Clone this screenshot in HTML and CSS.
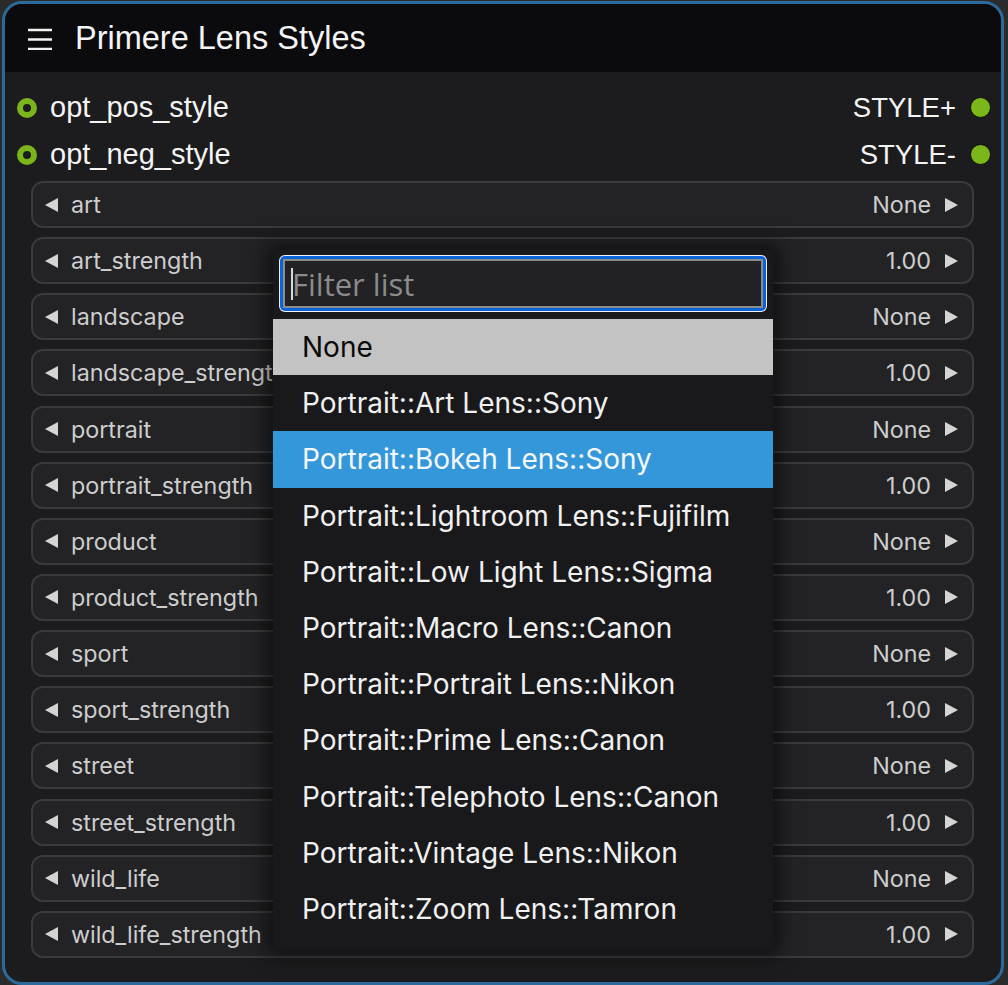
FILE: index.html
```html
<!DOCTYPE html>
<html lang="en">
<head>
<meta charset="utf-8">
<title>Primere Lens Styles</title>
<link rel="stylesheet" href="styles.css">
</head>
<body>
<div class="node">
  <div class="header">
    <svg class="menu-icon" width="26" height="22" viewBox="0 0 26 22">
      <path d="M1 2H25M1 11.5H25M1 21H25" stroke="#f2f2f2" stroke-width="2.6" fill="none"/>
    </svg>
    <span class="title">Primere Lens Styles</span>
  </div>
  <div class="body">
    <div class="io-row">
      <span class="in-dot"></span><span class="io-label">opt_pos_style</span>
      <span class="spacer"></span>
      <span class="out-label">STYLE+</span><span class="out-dot"></span>
    </div>
    <div class="io-row">
      <span class="in-dot"></span><span class="io-label">opt_neg_style</span>
      <span class="spacer"></span>
      <span class="out-label">STYLE-</span><span class="out-dot"></span>
    </div>
    <div class="widgets">
      <div class="widget"><svg class="arr" viewBox="0 0 13 14"><path d="M0 7L13 0V14Z"/></svg><span class="w-label">art</span><span class="w-value">None</span><svg class="arr" viewBox="0 0 13 14"><path d="M13 7L0 0V14Z"/></svg></div>
      <div class="widget"><svg class="arr" viewBox="0 0 13 14"><path d="M0 7L13 0V14Z"/></svg><span class="w-label">art_strength</span><span class="w-value">1.00</span><svg class="arr" viewBox="0 0 13 14"><path d="M13 7L0 0V14Z"/></svg></div>
      <div class="widget"><svg class="arr" viewBox="0 0 13 14"><path d="M0 7L13 0V14Z"/></svg><span class="w-label">landscape</span><span class="w-value">None</span><svg class="arr" viewBox="0 0 13 14"><path d="M13 7L0 0V14Z"/></svg></div>
      <div class="widget"><svg class="arr" viewBox="0 0 13 14"><path d="M0 7L13 0V14Z"/></svg><span class="w-label">landscape_strength</span><span class="w-value">1.00</span><svg class="arr" viewBox="0 0 13 14"><path d="M13 7L0 0V14Z"/></svg></div>
      <div class="widget"><svg class="arr" viewBox="0 0 13 14"><path d="M0 7L13 0V14Z"/></svg><span class="w-label">portrait</span><span class="w-value">None</span><svg class="arr" viewBox="0 0 13 14"><path d="M13 7L0 0V14Z"/></svg></div>
      <div class="widget"><svg class="arr" viewBox="0 0 13 14"><path d="M0 7L13 0V14Z"/></svg><span class="w-label">portrait_strength</span><span class="w-value">1.00</span><svg class="arr" viewBox="0 0 13 14"><path d="M13 7L0 0V14Z"/></svg></div>
      <div class="widget"><svg class="arr" viewBox="0 0 13 14"><path d="M0 7L13 0V14Z"/></svg><span class="w-label">product</span><span class="w-value">None</span><svg class="arr" viewBox="0 0 13 14"><path d="M13 7L0 0V14Z"/></svg></div>
      <div class="widget"><svg class="arr" viewBox="0 0 13 14"><path d="M0 7L13 0V14Z"/></svg><span class="w-label">product_strength</span><span class="w-value">1.00</span><svg class="arr" viewBox="0 0 13 14"><path d="M13 7L0 0V14Z"/></svg></div>
      <div class="widget"><svg class="arr" viewBox="0 0 13 14"><path d="M0 7L13 0V14Z"/></svg><span class="w-label">sport</span><span class="w-value">None</span><svg class="arr" viewBox="0 0 13 14"><path d="M13 7L0 0V14Z"/></svg></div>
      <div class="widget"><svg class="arr" viewBox="0 0 13 14"><path d="M0 7L13 0V14Z"/></svg><span class="w-label">sport_strength</span><span class="w-value">1.00</span><svg class="arr" viewBox="0 0 13 14"><path d="M13 7L0 0V14Z"/></svg></div>
      <div class="widget"><svg class="arr" viewBox="0 0 13 14"><path d="M0 7L13 0V14Z"/></svg><span class="w-label">street</span><span class="w-value">None</span><svg class="arr" viewBox="0 0 13 14"><path d="M13 7L0 0V14Z"/></svg></div>
      <div class="widget"><svg class="arr" viewBox="0 0 13 14"><path d="M0 7L13 0V14Z"/></svg><span class="w-label">street_strength</span><span class="w-value">1.00</span><svg class="arr" viewBox="0 0 13 14"><path d="M13 7L0 0V14Z"/></svg></div>
      <div class="widget"><svg class="arr" viewBox="0 0 13 14"><path d="M0 7L13 0V14Z"/></svg><span class="w-label">wild_life</span><span class="w-value">None</span><svg class="arr" viewBox="0 0 13 14"><path d="M13 7L0 0V14Z"/></svg></div>
      <div class="widget"><svg class="arr" viewBox="0 0 13 14"><path d="M0 7L13 0V14Z"/></svg><span class="w-label">wild_life_strength</span><span class="w-value">1.00</span><svg class="arr" viewBox="0 0 13 14"><path d="M13 7L0 0V14Z"/></svg></div>
    </div>
  </div>
</div>

<div class="dropdown">
  <div class="filter-outer">
    <div class="filter-blue">
      <div class="filter"><span class="caret"></span><span class="placeholder">Filter list</span></div>
    </div>
  </div>
  <div class="items">
    <div class="item selected">None</div>
    <div class="item">Portrait::Art Lens::Sony</div>
    <div class="item hover">Portrait::Bokeh Lens::Sony</div>
    <div class="item">Portrait::Lightroom Lens::Fujifilm</div>
    <div class="item">Portrait::Low Light Lens::Sigma</div>
    <div class="item">Portrait::Macro Lens::Canon</div>
    <div class="item">Portrait::Portrait Lens::Nikon</div>
    <div class="item">Portrait::Prime Lens::Canon</div>
    <div class="item">Portrait::Telephoto Lens::Canon</div>
    <div class="item">Portrait::Vintage Lens::Nikon</div>
    <div class="item">Portrait::Zoom Lens::Tamron</div>
  </div>
</div>
</body>
</html>
```

FILE: styles.css
```css
html, body {
  margin: 0;
  padding: 0;
  background: #2b2b2b;
  width: 1008px;
  height: 985px;
  overflow: hidden;
}

.node {
  box-sizing: border-box;
  margin: 1px 0 0 2px;
  width: 1002px;
  height: 984px;
  border: 3.5px solid #2c6a9c;
  border-radius: 20px;
  background: #1c1c1e;
  overflow: hidden;
  display: flex;
  flex-direction: column;
}

.header {
  height: 68px;
  flex: none;
  background: #0b0b0d;
  display: flex;
  align-items: center;
  padding-left: 22px;
  gap: 22px;
}

.menu-icon {
  display: block;
  margin-top: 1px;
}

.title {
  font-family: "Liberation Sans", Arial, sans-serif;
  font-size: 32.5px;
  color: #f4f4f4;
}

.body {
  padding: 12px 10px 0 0;
  display: flex;
  flex-direction: column;
}

.io-row {
  height: 47px;
  display: flex;
  align-items: center;
  font-family: "Liberation Sans", Arial, sans-serif;
  font-size: 29px;
  color: #f4f4f4;
}

.out-label {
  font-size: 27.5px;
}

.in-dot {
  box-sizing: border-box;
  width: 20px;
  height: 20px;
  border-radius: 50%;
  border: 6px solid #79b51b;
  background: #1c1c1e;
  margin-left: 12px;
  margin-right: 13px;
}

.spacer {
  flex: 1;
}

.out-dot {
  box-sizing: border-box;
  width: 21px;
  height: 21px;
  border-radius: 50%;
  background: #7bb61a;
  border: 1.5px solid #0c0c0c;
  margin-left: 14px;
}

.widgets {
  margin: 3px 17px 0 26px;
  display: flex;
  flex-direction: column;
  gap: 9.15px;
}

.widget {
  box-sizing: border-box;
  height: 47px;
  border: 2px solid #3a3a3e;
  border-radius: 12px;
  background: #232326;
  display: flex;
  align-items: center;
  padding: 0 14px 0 12px;
  font-family: Inter, "Noto Sans", sans-serif;
  font-size: 23.3px;
  color: #cdcdcd;
}

.arr {
  width: 13px;
  height: 14px;
  flex: none;
  fill: #d4d4d4;
}

.w-label {
  margin-left: 13px;
  flex: 1;
  white-space: nowrap;
}

.w-value {
  margin-right: 14px;
}

.dropdown {
  position: absolute;
  left: 273px;
  top: 250px;
  width: 500px;
  box-sizing: border-box;
  padding: 5px 0 12px 0;
  background: #19191b;
  box-shadow: 0 0 18px 6px rgba(0, 0, 0, 0.55);
}

.filter-outer {
  margin: 0 6px;
  background: #f2f2f2;
  border-radius: 6px;
  padding: 1px;
}

.filter-blue {
  background: #0a63d8;
  border-radius: 5px;
  padding: 3px;
}

.filter {
  box-sizing: border-box;
  height: 49px;
  border: 2px solid #8c8c8c;
  background: #222225;
  display: flex;
  align-items: center;
  padding-left: 6px;
  font-family: "Open Sans", "Noto Sans", sans-serif;
  font-size: 31px;
  color: #8b8b8b;
}

.caret {
  width: 2px;
  height: 32px;
  background: #d8d8d8;
  margin-right: -1px;
}

.items {
  margin-top: 7px;
}

.item {
  height: 56.2px;
  display: flex;
  align-items: center;
  padding-left: 29px;
  font-family: Inter, "Noto Sans", sans-serif;
  font-size: 28px;
  color: #f0f0f0;
  white-space: nowrap;
}

.item.selected {
  background: #c3c3c3;
  color: #0a0a0a;
}

.item.hover {
  background: #3497d9;
  color: #f4f8fc;
}
```
